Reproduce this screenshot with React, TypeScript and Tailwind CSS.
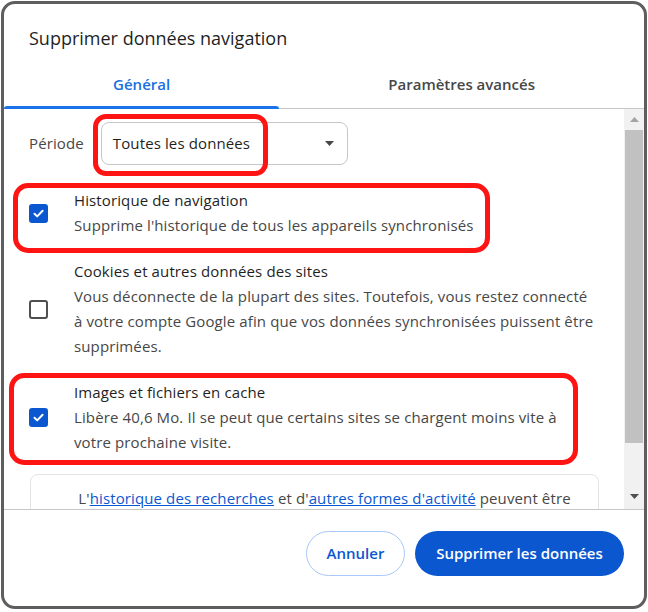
import React from "react";

function CheckBox({ checked }: { checked: boolean }) {
  if (checked) {
    return (
      <div className="w-[19px] h-[19px] shrink-0 rounded-[3px] bg-[#0b57d0] flex items-center justify-center">
        <svg width="13" height="13" viewBox="0 0 13 13">
          <path d="M2.5 6.8 L5.2 9.4 L10.6 3.8" fill="none" stroke="white" strokeWidth="2" strokeLinecap="round" strokeLinejoin="round" />
        </svg>
      </div>
    );
  }
  return <div className="w-[19px] h-[19px] shrink-0 rounded-[3px] border-2 border-[#4f4f4f] bg-white" />;
}

function Item({ checked, lines, className }: { checked: boolean; lines: string[]; className?: string }) {
  return (
    <div className={"flex items-center gap-[26px] pl-[25px] " + (className ?? "")}>
      <CheckBox checked={checked} />
      <div className="text-[15px] leading-[25px] tracking-[0.12px] whitespace-nowrap">
        {lines.map((l, i) => (
          <div key={i} className={i === 0 ? "text-[#1f1f1f]" : "text-[#474747]"}>
            {l}
          </div>
        ))}
      </div>
    </div>
  );
}

export default function App() {
  return (
    <div className="relative w-[648px] h-[612px] bg-white p-px font-['Open_Sans',sans-serif]">
      <div className="w-[646px] h-[608px] flex flex-col border-[3px] border-[#5e5e5e] rounded-[14px] bg-white overflow-hidden">
        {/* Header */}
        <div className="h-[56px] shrink-0 pl-[25px] pt-[22px] text-[18px] leading-[24px] text-[#1f1f1f]">
          Supprimer données navigation
        </div>
        {/* Tabs */}
        <div className="flex h-[49px] shrink-0 border-b border-[#c7c7c7]">
          <div className="relative grow flex items-center justify-center text-[15px] font-semibold text-[#1a6fe0]">
            Général
            <div className="absolute left-0 right-0 bottom-[-1px] h-[3px] rounded-t-[3px] bg-[#1a73e8]" />
          </div>
          <div className="grow flex items-center justify-center text-[15px] font-semibold text-[#474747]">
            Paramètres avancés
          </div>
        </div>
        {/* Scroll area */}
        <div className="flex h-[401px] shrink-0 border-b border-[#c7c7c7]">
          <div className="grow overflow-hidden pt-[13px]">
            <div className="flex items-center pl-[25px] gap-[17px]">
              <div className="text-[15px] tracking-[0.12px] text-[#474747]">Période</div>
              <div className="w-[247px] h-[43px] rounded-[8px] border border-[#c4c7c5] flex items-center justify-between pl-[11px] pr-[13px]">
                <span className="text-[15px] tracking-[0.12px] text-[#1f1f1f]">Toutes les données</span>
                <svg width="9" height="5" viewBox="0 0 9 5">
                  <path d="M0 0 L9 0 L4.5 5 Z" fill="#474747" />
                </svg>
              </div>
            </div>
            <Item
              className="mt-[23px]"
              checked
              lines={["Historique de navigation", "Supprime l'historique de tous les appareils synchronisés"]}
            />
            <Item
              className="mt-[21px]"
              checked={false}
              lines={[
                "Cookies et autres données des sites",
                "Vous déconnecte de la plupart des sites. Toutefois, vous restez connecté",
                "à votre compte Google afin que vos données synchronisées puissent être",
                "supprimées.",
              ]}
            />
            <Item
              className="mt-[21px]"
              checked
              lines={[
                "Images et fichiers en cache",
                "Libère 40,6 Mo. Il se peut que certains sites se chargent moins vite à",
                "votre prochaine visite.",
              ]}
            />
            <div className="mt-[19px] ml-[26px] mr-[25px] h-[60px] rounded-[8px] border border-[#e3e3e3] pt-[11px] pl-[20px] text-center text-[15px] leading-[25px] tracking-[0.12px] text-[#474747]">
              <div className="whitespace-nowrap">
                L'<span className="text-[#0b57d0] underline">historique des recherches</span> et d'
                <span className="text-[#0b57d0] underline">autres formes d'activité</span> peuvent être
              </div>
            </div>
          </div>
          {/* Fake scrollbar */}
          <div className="w-[20px] shrink-0 bg-[#f1f1f1] flex flex-col items-center">
            <div className="h-[20px] flex items-center justify-center">
              <svg width="9" height="5" viewBox="0 0 9 5">
                <path d="M0 5 L9 5 L4.5 0 Z" fill="#a3a3a3" />
              </svg>
            </div>
            <div className="w-[18px] h-[313px] mt-px bg-[#c1c1c1]" />
            <div className="grow" />
            <div className="h-[26px] flex items-center justify-center">
              <svg width="9" height="5" viewBox="0 0 9 5">
                <path d="M0 0 L9 0 L4.5 5 Z" fill="#505050" />
              </svg>
            </div>
          </div>
        </div>
        {/* Footer */}
        <div className="flex justify-end gap-[10px] pt-[21px] pr-[20px]">
          <button className="h-[45px] w-[99px] rounded-full border border-[#a8c7fa] bg-white text-[15px] font-semibold text-[#0b57d0]">
            Annuler
          </button>
          <button className="h-[45px] w-[209px] rounded-full bg-[#0b57d0] text-[15px] font-semibold text-white">
            Supprimer les données
          </button>
        </div>
      </div>
      {/* Red annotation boxes */}
      <div className="absolute left-[93px] top-[114px] w-[175px] h-[62px] border-[5px] border-[#ff1414] rounded-[13px] pointer-events-none" />
      <div className="absolute left-[13px] top-[183px] w-[477px] h-[70px] border-[5px] border-[#ff1414] rounded-[15px] pointer-events-none" />
      <div className="absolute left-[9px] top-[373px] w-[569px] h-[92px] border-[5px] border-[#ff1414] rounded-[15px] pointer-events-none" />
    </div>
  );
}
